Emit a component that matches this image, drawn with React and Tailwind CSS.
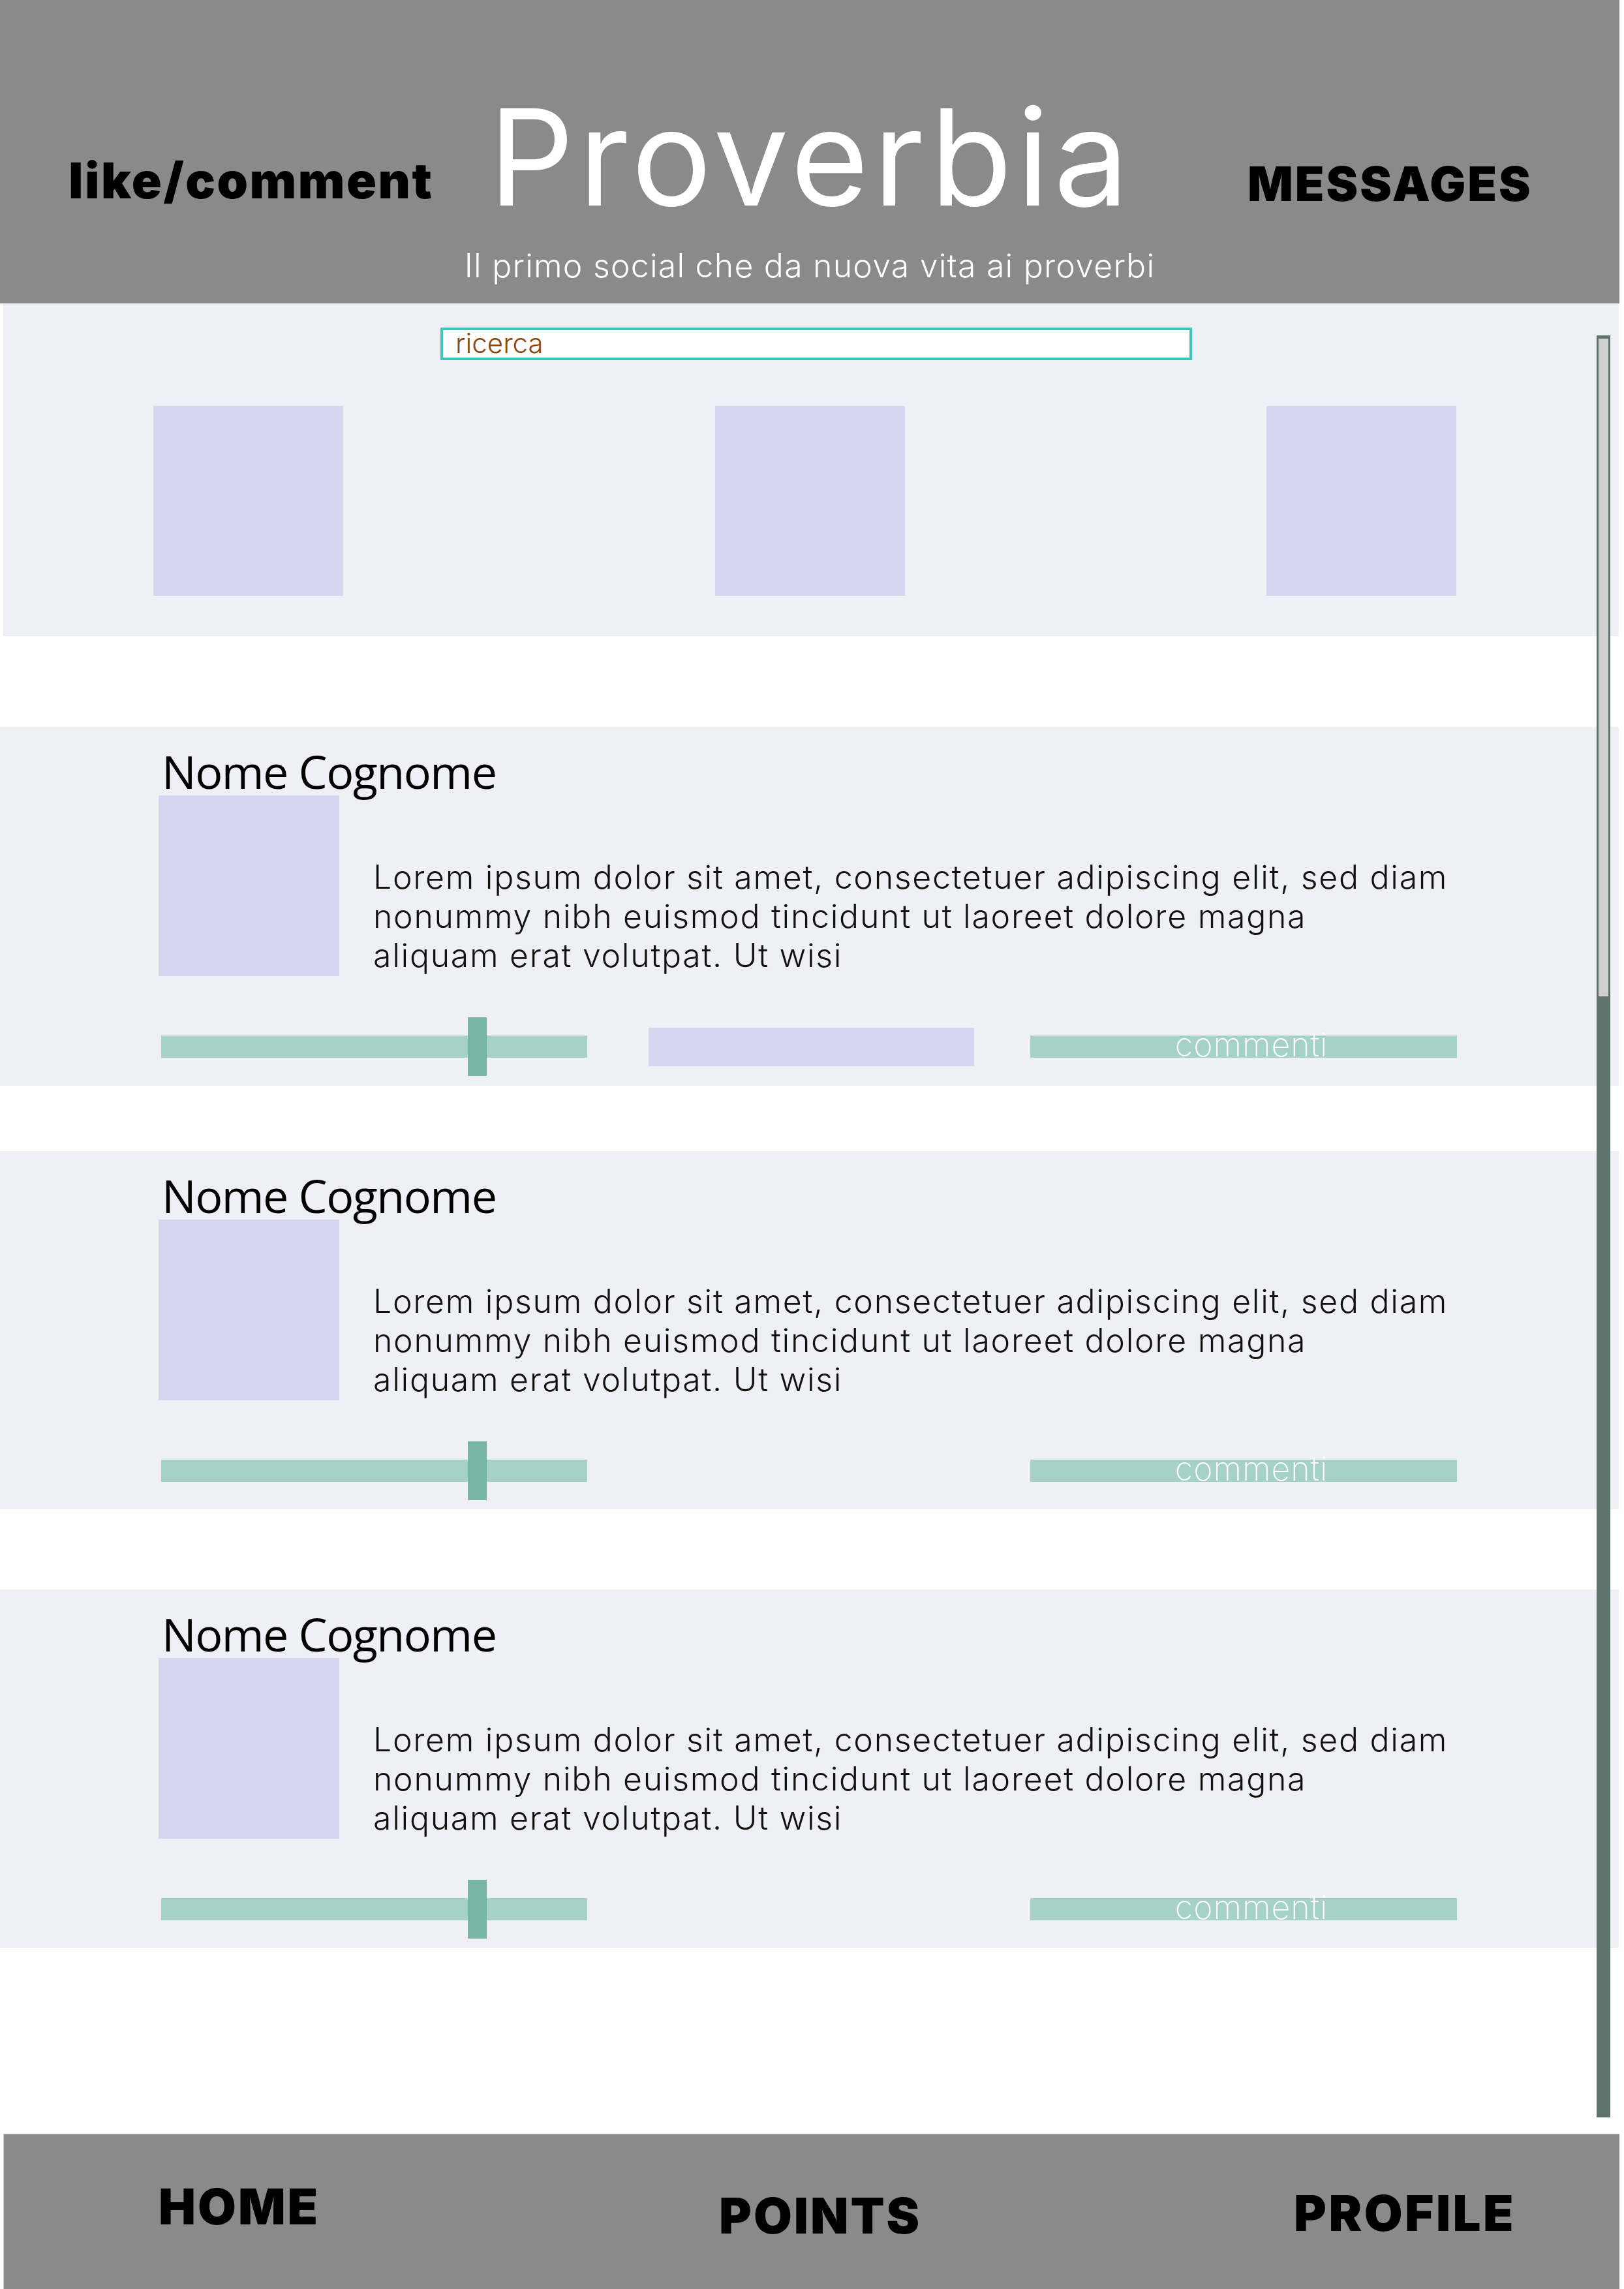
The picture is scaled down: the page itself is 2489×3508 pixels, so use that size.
const POSTS = [
  { id: 1, withBox: true, gapTop: 'mt-[139px]', h: 'h-[550px]' },
  { id: 2, withBox: false, gapTop: 'mt-[100px]', h: 'h-[549px]' },
  { id: 3, withBox: false, gapTop: 'mt-[123px]', h: 'h-[549px]' },
]

const INTER = "font-['Inter','Liberation_Sans',sans-serif]"

function Post({ post }) {
  return (
    <div className={`w-[2481px] ${post.h} ${post.gapTop} bg-[#eff0f5]`}>
      {/* Name */}
      <div className="pl-[248px] pt-[33px] h-[105px] text-[70px] leading-[70px] text-black font-['Open_Sans','Noto_Sans',sans-serif] tracking-[-1.5px]">
        Nome Cognome
      </div>

      {/* Avatar + text */}
      <div className="flex h-[277px]">
        <div className="ml-[243px] w-[277px] h-[277px] bg-[#d7d6f0]" />
        <p className={`ml-[52px] mt-[95px] text-[50px] leading-[60px] font-light tracking-[1.7px] text-[#111] ${INTER}`}>
          Lorem ipsum dolor sit amet, consectetuer adipiscing elit, sed diam<br />
          nonummy nibh euismod tincidunt ut laoreet dolore magna<br />
          aliquam erat volutpat. Ut wisi
        </p>
      </div>

      {/* Actions */}
      <div className="flex items-center h-[90px] mt-[63px]">
        <div className="relative ml-[247px] w-[653px] h-[34px] bg-[#a6d1c7]">
          <div className="absolute left-[470px] -top-[28px] w-[29px] h-[90px] bg-[#76b5a8]" />
        </div>
        {post.withBox
          ? <div className="ml-[94px] w-[499px] h-[59px] bg-[#d7d6f0]" />
          : <div className="ml-[94px] w-[499px] h-[59px]" />}
        <div className={`ml-[86px] w-[654px] h-[34px] bg-[#a6d1c7] flex justify-center pl-[24px] ${INTER}`}>
          <span className="text-[50px] leading-[28px] font-extralight tracking-[1px] text-white">commenti</span>
        </div>
      </div>
    </div>
  )
}

export default function App() {
  return (
    <div className="relative w-[2489px] h-[3508px] bg-white overflow-hidden">
      {/* Header */}
      <header className={`w-[2482px] h-[465px] bg-[#8a8a8a] ${INTER}`}>
        <div className="flex items-start pt-[138px]">
          <div className="ml-[105px] w-[644px] mt-[100px] text-[76px] leading-none font-black text-black tracking-[2.5px]">
            like/comment
          </div>
          <div className="w-[1163px] text-[205px] leading-none font-normal text-white tracking-[7px]">
            Proverbia
          </div>
          <div className="mt-[107px] text-[73px] leading-none font-black text-black tracking-[3px]">
            MESSAGES
          </div>
        </div>
        <div className="mt-[39px] text-center text-[50px] leading-none font-light tracking-[1.2px] text-white">
          Il primo social che da nuova vita ai proverbi
        </div>
      </header>

      {/* Feed */}
      <main className="h-[2805px]">
        <section className="ml-[5px] w-[2476px] h-[510px] bg-[#eff0f5] pt-[37px]">
          <div className={`ml-[670px] w-[1152px] h-[50px] border-4 border-[#3cc4b9] bg-white pl-[19px] ${INTER}`}>
            <span className="text-[42px] leading-[40px] font-light text-[#8b4a14]">ricerca</span>
          </div>
          <div className="flex mt-[70px]">
            <div className="ml-[230px] w-[291px] h-[291px] bg-[#d7d6f0]" />
            <div className="ml-[570px] w-[291px] h-[291px] bg-[#d7d6f0]" />
            <div className="ml-[554px] w-[291px] h-[291px] bg-[#d7d6f0]" />
          </div>
        </section>

        {POSTS.map((p) => <Post key={p.id} post={p} />)}
      </main>

      {/* Bottom nav */}
      <footer className={`ml-[5px] w-[2477px] h-[238px] bg-[#8a8a8a] border-t border-l border-[#c9c9c9] flex items-start ${INTER}`}>
        <div className="ml-[237px] w-[859px] mt-[72px] text-[76px] leading-none font-black tracking-[3px] text-black">HOME</div>
        <div className="w-[881px] mt-[86px] text-[76px] leading-none font-black tracking-[3px] text-black">POINTS</div>
        <div className="mt-[82px] text-[76px] leading-none font-black tracking-[3.5px] text-black">PROFILE</div>
      </footer>

      {/* Scrollbar */}
      <div className="absolute left-[2447px] top-[514px] w-[21px] h-[2731px] bg-[#5f736d] pt-[5px] px-[3px]">
        <div className="h-[1008px] bg-[#cfcfcf]" />
      </div>
    </div>
  )
}
